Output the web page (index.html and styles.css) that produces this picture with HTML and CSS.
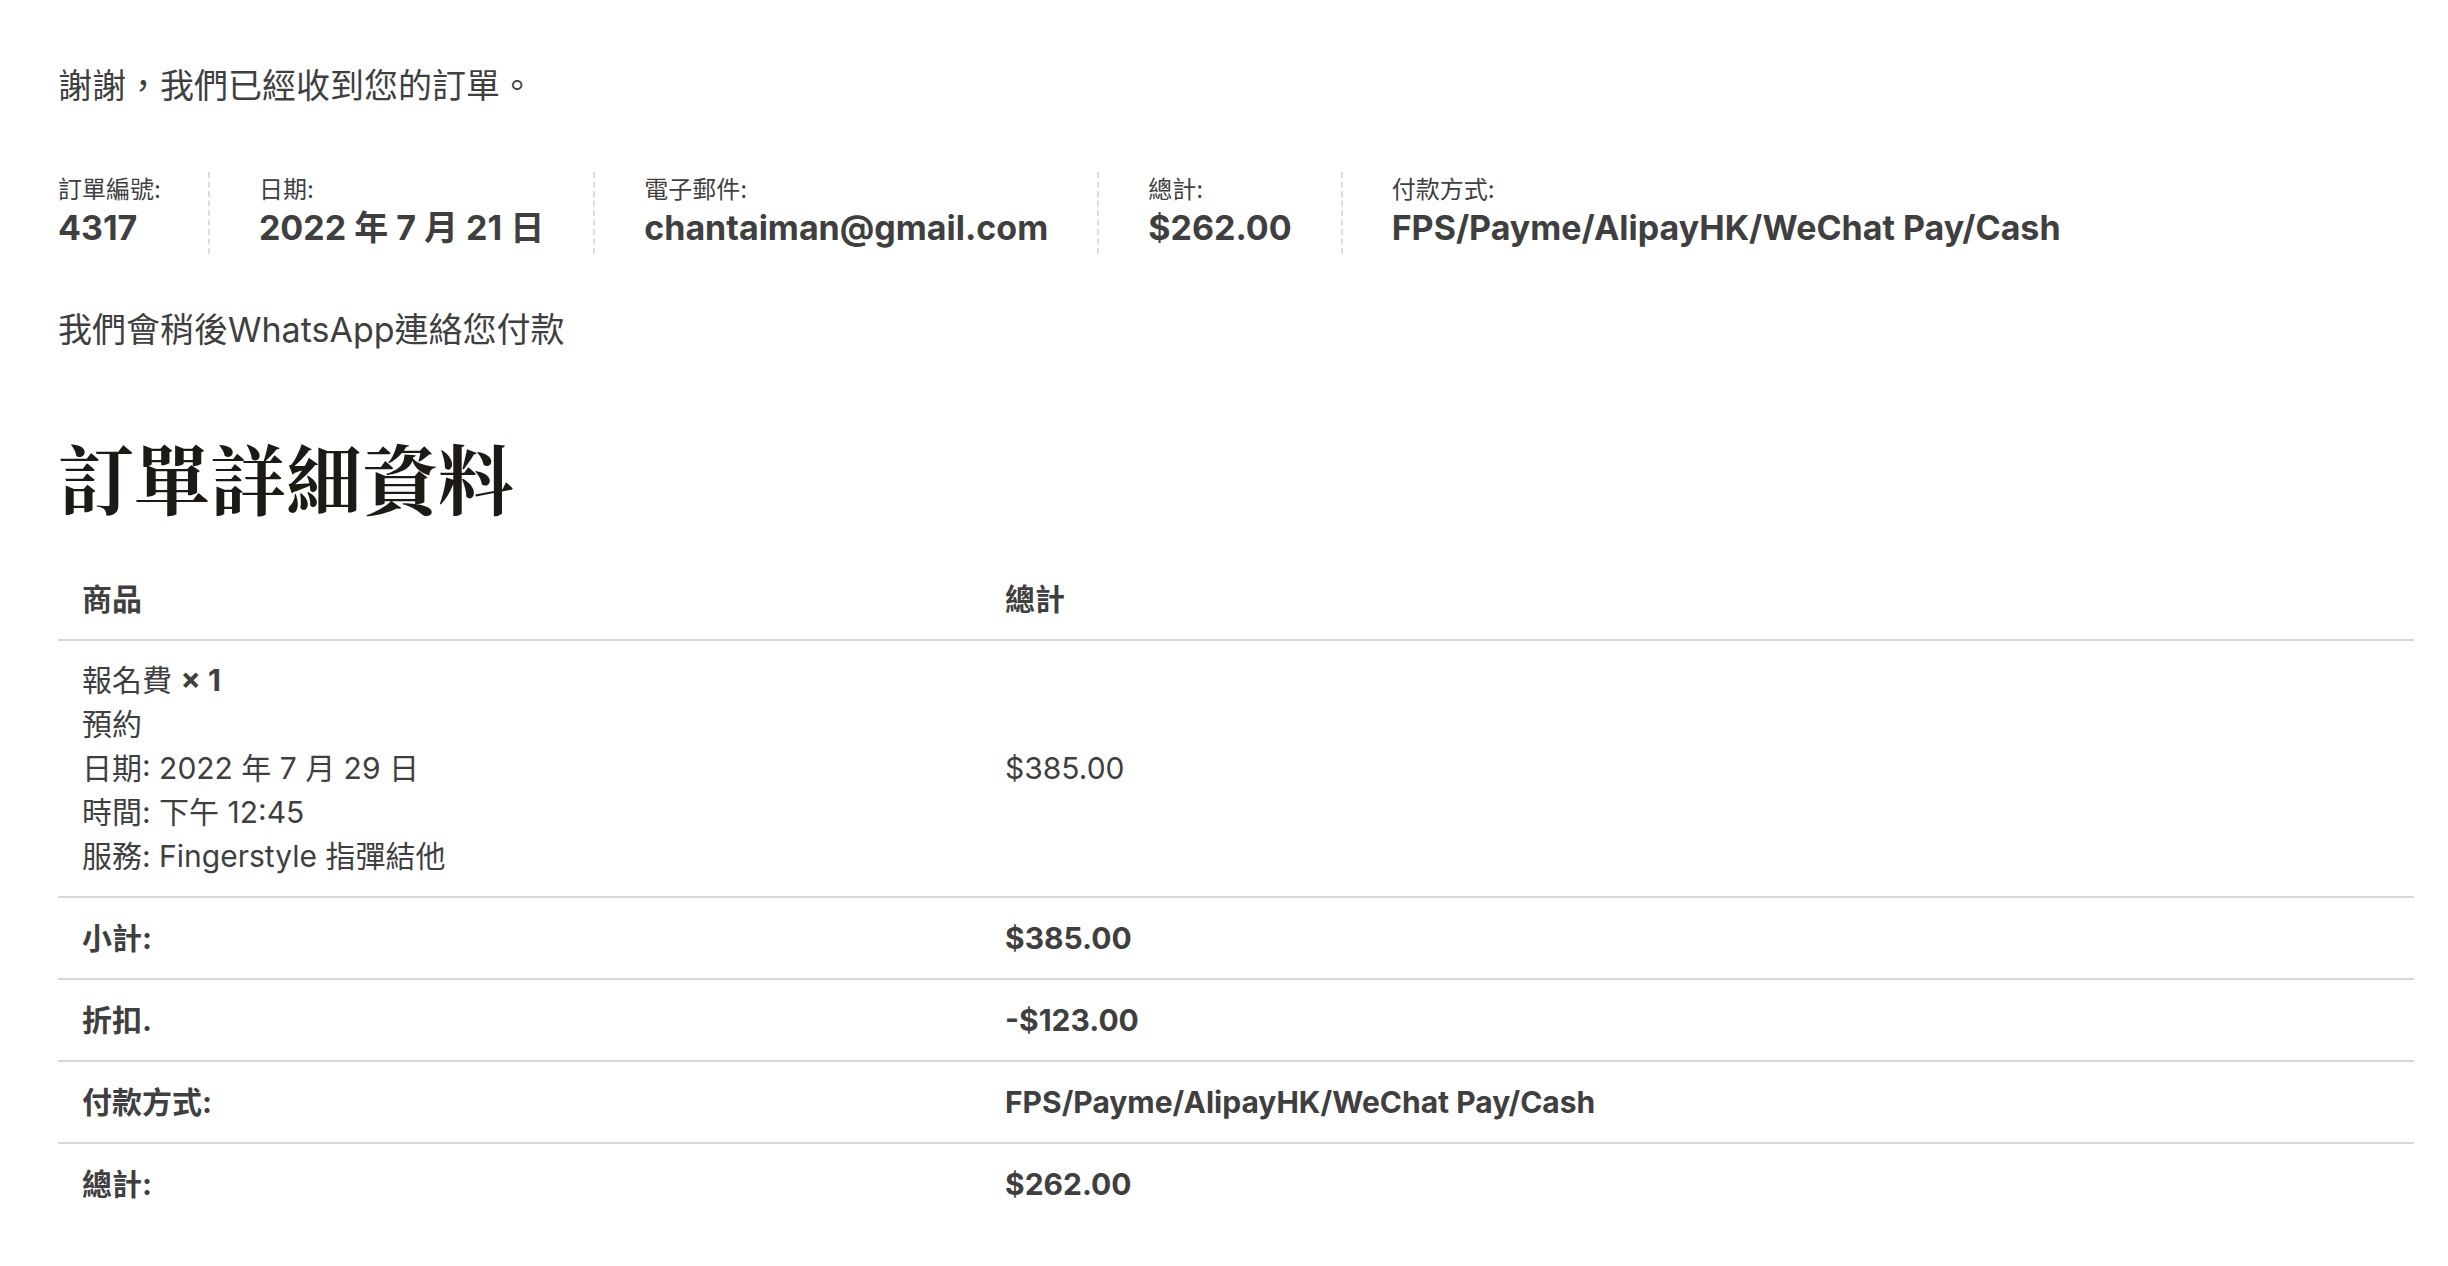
FILE: index.html
```html
<!DOCTYPE html>
<html lang="zh-Hant">

<head>
  <meta charset="UTF-8" />
  <meta name="viewport" content="width=device-width, initial-scale=1.0" />
  <title>訂單已收到</title>
  <link rel="stylesheet" href="styles.css">
</head>

<body>

  <main class="pedido">
    <p class="gracias">謝謝，我們已經收到您的訂單。</p>

    <ul class="resumen">
      <li>訂單編號:<strong>4317</strong></li>
      <li>日期:<strong>2022 年 7 月 21 日</strong></li>
      <li>電子郵件:<strong>chantaiman@gmail.com</strong></li>
      <li>總計:<strong>$262.00</strong></li>
      <li>付款方式:<strong>FPS/Payme/AlipayHK/WeChat Pay/Cash</strong></li>
    </ul>

    <p class="aviso">我們會稍後WhatsApp連絡您付款</p>

    <h2 class="titulo">訂單詳細資料</h2>

    <table class="detalle">
      <thead>
        <tr>
          <th>商品</th>
          <th>總計</th>
        </tr>
      </thead>
      <tbody>
        <tr>
          <td>
            報名費 <strong>× 1</strong><br>
            預約<br>
            日期: 2022 年 7 月 29 日<br>
            時間: 下午 12:45<br>
            服務: Fingerstyle 指彈結他
          </td>
          <td>$385.00</td>
        </tr>
      </tbody>
      <tfoot>
        <tr>
          <th>小計:</th>
          <th>$385.00</th>
        </tr>
        <tr>
          <th>折扣.</th>
          <th>-$123.00</th>
        </tr>
        <tr>
          <th>付款方式:</th>
          <th>FPS/Payme/AlipayHK/WeChat Pay/Cash</th>
        </tr>
        <tr>
          <th>總計:</th>
          <th>$262.00</th>
        </tr>
      </tfoot>
    </table>
  </main>

</body>

</html>
```

FILE: styles.css
```css
body {
  font-family: Inter, "Noto Sans CJK TC", sans-serif;
  margin: 0;
  padding: 0;
  background: #ffffff;
  color: #3f3f3f;
}

.pedido {
  padding: 61px 35px 40px 58px;
}

.gracias,
.aviso {
  font-size: 34px;
  line-height: 50px;
  margin: 0;
}

/* Resumen del pedido */
.resumen {
  list-style: none;
  display: flex;
  margin: 61px 0 51px;
  padding: 0;
}

.resumen li {
  font-size: 24px;
  line-height: 36px;
  padding: 0 49px 6px;
  border-right: 2px dashed #dcdcdc;
}

.resumen li:first-child {
  padding-left: 0;
  padding-right: 47px;
}

.resumen li:last-child {
  border-right: none;
}

.resumen strong {
  display: block;
  font-size: 34px;
  line-height: 40px;
  font-weight: 700;
}

.titulo {
  font-family: "Noto Serif CJK TC", "Noto Sans CJK TC", serif;
  font-size: 76px;
  line-height: 92px;
  font-weight: 700;
  color: #1d1915;
  margin: 76px 0 37px;
}

/* Tabla de detalle */
.detalle {
  width: 2356px;
  border-collapse: collapse;
  font-size: 30px;
  line-height: 44px;
}

.detalle th,
.detalle td {
  text-align: left;
  vertical-align: middle;
  padding: 18px 24px;
  border-bottom: 2px solid #d6d6d6;
}

.detalle th {
  font-weight: 700;
}

.detalle thead th {
  padding: 17px 24px 18px;
}

.detalle thead th:first-child {
  width: 875px;
}

.detalle tbody td {
  padding: 17px 24px 18px;
}

.detalle tfoot tr:last-child th {
  border-bottom: none;
}
```
